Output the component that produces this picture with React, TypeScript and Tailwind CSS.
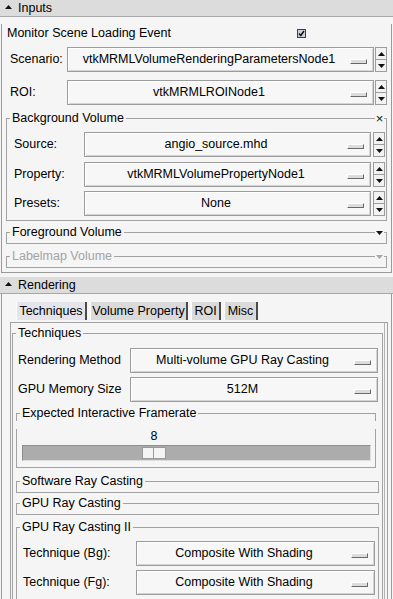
import React from "react";

const LINE = "border-[#a2a2a2]";

function Tri({ dir, color = "#111" }: { dir: "up" | "down"; color?: string }) {
  return (
    <svg width="7" height="4" viewBox="0 0 7 4" className="block">
      {dir === "up" ? (
        <path d="M0 4 L3.5 0 L7 4Z" fill={color} />
      ) : (
        <path d="M0 0 L3.5 4 L7 0Z" fill={color} />
      )}
    </svg>
  );
}

function ComboBtn() {
  return (
    <span className="block w-[17px] h-[5px] mr-[6px] mt-[3px] shrink-0 bg-[#dcdcdc] border border-t-[#ffffff] border-l-[#ffffff] border-b-[#6a6a6a] border-r-[#6a6a6a]" />
  );
}

function Combo({ text, className = "" }: { text: string; className?: string }) {
  return (
    <div
      className={`h-[25px] flex items-center border border-[#9c9c9c] bg-[#f7f7f7] shadow-[inset_1px_1px_0_#ffffff,inset_-1px_-1px_0_#d4d4d4] ${className}`}
    >
      <span className="flex-1 text-center whitespace-nowrap overflow-hidden">{text}</span>
      <ComboBtn />
    </div>
  );
}

function Spin({ className = "" }: { className?: string }) {
  return (
    <div className={`w-[12px] h-[25px] shrink-0 flex flex-col border border-[#9c9c9c] bg-[#f2f2f2] ${className}`}>
      <div className="flex-1 flex items-center justify-center border-b border-[#9c9c9c]">
        <Tri dir="up" />
      </div>
      <div className="flex-1 flex items-center justify-center">
        <Tri dir="down" />
      </div>
    </div>
  );
}

function Frame({
  title,
  icon,
  dim,
  className = "",
  bodyClass = "",
  children,
}: {
  title: string;
  icon?: React.ReactNode;
  dim?: boolean;
  className?: string;
  bodyClass?: string;
  children?: React.ReactNode;
}) {
  return (
    <div className={className}>
      <div className="flex h-[15px]">
        <div className={`w-[4px] h-[8px] self-end border-t border-l ${LINE}`} />
        <span className={`px-[2px] leading-[15px] whitespace-nowrap ${dim ? "text-[#a3a3a3]" : ""}`}>{title}</span>
        <div className={`flex-1 h-[8px] self-end border-t ${LINE}`} />
        {icon ? (
          <>
            <span className="flex items-center justify-center w-[9px] h-[15px]">{icon}</span>
            <div className={`w-[3px] h-[8px] self-end border-t border-r ${LINE}`} />
          </>
        ) : (
          <div className={`w-[4px] h-[8px] self-end border-t border-r ${LINE}`} />
        )}
      </div>
      <div className={`border-x border-b ${LINE} ${bodyClass}`}>{children}</div>
    </div>
  );
}

function Header({ title }: { title: string }) {
  return (
    <div className="h-[17px] flex items-center bg-[#dcdcdc] border-b border-[#a8a8a8]">
      <span className="ml-[5px] mb-[3px]">
        <Tri dir="up" />
      </span>
      <span className="ml-[6px] leading-[15px]">{title}</span>
    </div>
  );
}

function Checkbox() {
  return (
    <svg width="9" height="9" viewBox="0 0 9 9" className="block">
      <rect x="0.5" y="0.5" width="8" height="8" fill="#c9d1df" stroke="#3a3f4a" />
      <path d="M2 4.5 L3.8 6.5 L7 2" fill="none" stroke="#111" strokeWidth="1.5" />
    </svg>
  );
}

function Tab({ label, w, active }: { label: string; w: string; active?: boolean }) {
  return (
    <div
      className={`${w} h-[18px] flex items-center justify-center border-l border-l-[#ffffff] border-r-2 border-r-[#4a4a4a] ${
        active ? "bg-[#e4e4ea]" : "bg-[#dadada]"
      }`}
    >
      {label}
    </div>
  );
}

export default function App() {
  return (
    <div className="w-[393px] h-[599px] overflow-hidden bg-[#f5f5f5] text-[#000] text-[12.5px] leading-[15px] font-['Liberation_Sans',Arial,sans-serif]">
      <Header title="Inputs" />
      <div className={`w-[391px] ml-[1px] border-x border-b border-[#9a9a9a] pb-[4px]`}>
        <div className="flex items-center h-[18px] mt-[7px] pl-[5px]">
          <span>Monitor Scene Loading Event</span>
          <span className="ml-auto mr-[85px]">
            <Checkbox />
          </span>
        </div>
        <div className="flex items-center mt-[5px] pl-[8px] pr-[4px]">
          <span className="w-[57px] shrink-0">Scenario:</span>
          <Combo text="vtkMRMLVolumeRenderingParametersNode1" className="flex-1" />
          <Spin className="ml-[1px]" />
        </div>
        <div className="flex items-center mt-[8px] pl-[8px] pr-[4px]">
          <span className="w-[57px] shrink-0">ROI:</span>
          <Combo text="vtkMRMLROINode1" className="flex-1" />
          <Spin className="ml-[1px]" />
        </div>
        <Frame
          title="Background Volume"
          className="mx-[4px] mt-[6px]"
          bodyClass="pt-[6px] pb-[4px]"
          icon={<span className="text-[13px] leading-[13px] text-[#111]">×</span>}
        >
          <div className="flex items-center pl-[7px] pr-[1px]">
            <span className="w-[70px] shrink-0">Source:</span>
            <Combo text="angio_source.mhd" className="flex-1" />
            <Spin className="ml-[2px]" />
          </div>
          <div className="flex items-center mt-[5px] pl-[7px] pr-[1px]">
            <span className="w-[70px] shrink-0">Property:</span>
            <Combo text="vtkMRMLVolumePropertyNode1" className="flex-1" />
            <Spin className="ml-[2px]" />
          </div>
          <div className="flex items-center mt-[4px] pl-[7px] pr-[1px]">
            <span className="w-[70px] shrink-0">Presets:</span>
            <Combo text="None" className="flex-1" />
            <Spin className="ml-[2px]" />
          </div>
        </Frame>
        <Frame
          title="Foreground Volume"
          className="mx-[4px] mt-[4px]"
          bodyClass="h-[4px]"
          icon={<Tri dir="down" />}
        />
        <Frame
          title="Labelmap Volume"
          dim
          className="mx-[4px] mt-[5px]"
          bodyClass="h-[4px]"
          icon={<Tri dir="down" color="#a8a8a8" />}
        />
      </div>

      <div className="mt-[4px]">
        <Header title="Rendering" />
      </div>
      <div className="w-[391px] ml-[1px] border-x border-[#9a9a9a] pt-[8px] h-[400px]">
        <div className="flex gap-[3px] pl-[14px]">
          <Tab label="Techniques" w="w-[71px]" active />
          <Tab label="Volume Property" w="w-[98px]" />
          <Tab label="ROI" w="w-[30px]" />
          <Tab label="Misc" w="w-[34px]" />
        </div>
        <div className="mt-[2px] ml-[8px] mr-[3px] border border-[#a2a2a2] shadow-[inset_-2px_0_0_#f5f5f5,inset_-3px_0_0_#b4b4b4] pb-[40px]">
          <Frame title="Techniques" className="mt-[3px] ml-[1px] mr-[4px]" bodyClass="pt-[7px] pb-[40px]">
            <div className="flex items-center pl-[5px] pr-[4px]">
              <span className="w-[112px] shrink-0">Rendering Method</span>
              <Combo text="Multi-volume GPU Ray Casting" className="flex-1" />
            </div>
            <div className="flex items-center mt-[4px] pl-[5px] pr-[4px]">
              <span className="w-[112px] shrink-0">GPU Memory Size</span>
              <Combo text="512M" className="flex-1" />
            </div>
            <Frame
              title="Expected Interactive Framerate"
              className="mt-[4px] ml-[3px] mr-[6px]"
              bodyClass="pb-[6px]"
            >
              <div className="mt-[8px] pl-[5px] h-[15px]">
                <div className="ml-[120px] w-[24px] text-center">8</div>
              </div>
              <div className="mt-[1px] ml-[5px] mr-[4px] h-[16px] flex items-center bg-[#acacac] border border-[#8e8e8e] border-b-[#dedede] border-r-[#dedede]">
                <div className="ml-[119px] flex h-[12px] border border-[#9a9a9a] bg-[#f4f4f4]">
                  <div className="w-[11px] h-full border-r border-[#9a9a9a]" />
                  <div className="w-[11px] h-full" />
                </div>
              </div>
            </Frame>
            <Frame title="Software Ray Casting" className="mt-[6px] ml-[3px] mr-[3px]" bodyClass="h-[4px]" />
            <Frame title="GPU Ray Casting" className="mt-[3px] ml-[3px] mr-[3px]" bodyClass="h-[4px]" />
            <Frame title="GPU Ray Casting II" className="mt-[5px] ml-[3px] mr-[3px]" bodyClass="pt-[6px] pb-[10px]">
              <div className="flex items-center pl-[6px] pr-[3px]">
                <span className="w-[113px] shrink-0">Technique (Bg):</span>
                <Combo text="Composite With Shading" className="flex-1" />
              </div>
              <div className="flex items-center mt-[4px] pl-[6px] pr-[3px]">
                <span className="w-[113px] shrink-0">Technique (Fg):</span>
                <Combo text="Composite With Shading" className="flex-1" />
              </div>
            </Frame>
          </Frame>
        </div>
      </div>
    </div>
  );
}
